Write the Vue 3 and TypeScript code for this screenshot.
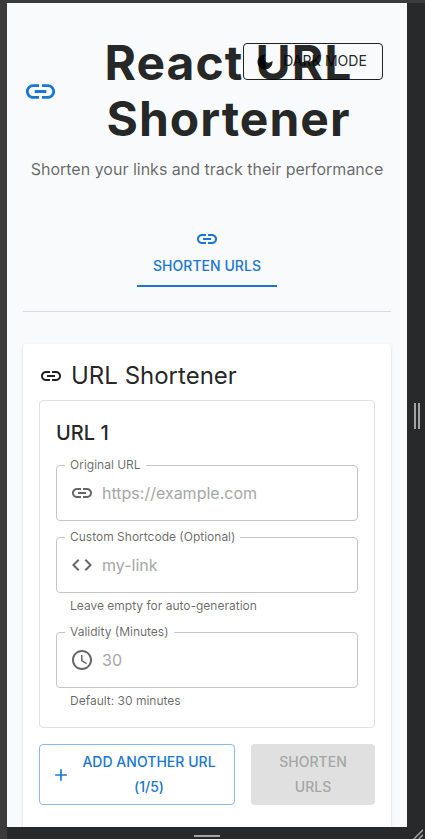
<script setup lang="ts">
import { ref } from 'vue'

interface Field {
  key: string
  label: string
  placeholder: string
  icon: string
  helper?: string
}

const icons: Record<string, string> = {
  link: 'M3.9 12c0-1.71 1.39-3.1 3.1-3.1h4V7H7c-2.76 0-5 2.24-5 5s2.24 5 5 5h4v-1.9H7c-1.71 0-3.1-1.39-3.1-3.1M8 13h8v-2H8zm9-6h-4v1.9h4c1.71 0 3.1 1.39 3.1 3.1s-1.39 3.1-3.1 3.1h-4V17h4c2.76 0 5-2.24 5-5s-2.24-5-5-5',
  moon: 'M12 3c-4.97 0-9 4.03-9 9s4.03 9 9 9 9-4.03 9-9c0-.46-.04-.92-.1-1.36-.98 1.37-2.58 2.26-4.4 2.26-2.98 0-5.4-2.42-5.4-5.4 0-1.81.89-3.42 2.26-4.4-.44-.06-.9-.1-1.36-.1',
  code: 'M9.4 16.6 4.8 12l4.6-4.6L8 6l-6 6 6 6zm5.2 0 4.6-4.6-4.6-4.6L16 6l6 6-6 6z',
  clock: 'M11.99 2C6.47 2 2 6.48 2 12s4.47 10 9.99 10C17.52 22 22 17.52 22 12S17.52 2 11.99 2M12 20c-4.42 0-8-3.58-8-8s3.58-8 8-8 8 3.58 8 8-3.58 8-8 8m.5-13H11v6l5.25 3.15.75-1.23-4.5-2.67z',
  add: 'M19 13h-6v6h-2v-6H5v-2h6V5h2v6h6z',
}

const fields: Field[] = [
  { key: 'url', label: 'Original URL', placeholder: 'https://example.com', icon: 'link' },
  { key: 'code', label: 'Custom Shortcode (Optional)', placeholder: 'my-link', icon: 'code', helper: 'Leave empty for auto-generation' },
  { key: 'validity', label: 'Validity (Minutes)', placeholder: '30', icon: 'clock', helper: 'Default: 30 minutes' },
]

const values = ref<Record<string, string>>({ url: '', code: '', validity: '' })
</script>

<template>
  <div class="frame">
    <main class="screen">
      <button class="btn outlined mode">
        <svg class="icon start" viewBox="0 0 24 24"><path :d="icons.moon" /></svg>
        Dark Mode
      </button>

      <header class="header">
        <svg class="icon logo" viewBox="0 0 24 24"><path :d="icons.link" /></svg>
        <h1>React URL Shortener</h1>
      </header>
      <p class="subtitle">Shorten your links and track their performance</p>

      <nav class="tabs">
        <button class="tab">
          <svg class="icon" viewBox="0 0 24 24"><path :d="icons.link" /></svg>
          <span>Shorten URLs</span>
        </button>
      </nav>
      <hr class="divider" />

      <section class="card">
        <h2>
          <svg class="icon" viewBox="0 0 24 24"><path :d="icons.link" /></svg>
          <span>URL Shortener</span>
        </h2>

        <div class="entry">
          <h3>URL 1</h3>
          <div v-for="f in fields" :key="f.key" class="field">
            <fieldset class="outline">
              <legend>{{ f.label }}</legend>
              <svg class="icon" viewBox="0 0 24 24"><path :d="icons[f.icon]" /></svg>
              <input v-model="values[f.key]" :placeholder="f.placeholder" :aria-label="f.label" />
            </fieldset>
            <p v-if="f.helper" class="helper">{{ f.helper }}</p>
          </div>
        </div>

        <div class="actions">
          <button class="btn outlined primary">
            <svg class="icon start" viewBox="0 0 24 24"><path :d="icons.add" /></svg>
            <span>Add Another URL (1/5)</span>
          </button>
          <button class="btn submit" disabled>Shorten URLs</button>
        </div>
      </section>
    </main>

    <div class="rail"><i class="grip-v"></i></div>
    <div class="bar">
      <i class="grip-h"></i>
      <svg class="corner" viewBox="0 0 12 12"><path d="M1 12 12 1M7 12l5-5" /></svg>
    </div>
  </div>
</template>

<style>
body {
  overflow: hidden;
}
</style>

<style scoped>
* {
  box-sizing: border-box;
}
.frame {
  display: grid;
  grid-template-columns: 400px 18px;
  grid-template-rows: 824px 12px;
  width: 425px;
  height: 839px;
  padding: 3px 0 0 7px;
  overflow: hidden;
  background: #3b3b3b;
  color: rgba(0, 0, 0, 0.87);
  font-family: Inter, 'Liberation Sans', sans-serif;
}
.screen {
  position: relative;
  overflow: hidden;
  padding: 32px 16px 0;
  background: #f8fafc;
}
.rail {
  display: flex;
  align-items: center;
  justify-content: center;
  background: #28292b;
}
.grip-v {
  width: 6px;
  height: 26px;
  margin: 2px 0 0 2px;
  border: solid #a2a3a4;
  border-width: 0 2px;
}
.bar {
  position: relative;
  grid-column: 1 / -1;
  display: flex;
  padding: 8px 0 0 187px;
  background: #28292b;
}
.grip-h {
  width: 26px;
  height: 2px;
  background: #a2a3a4;
}
.corner {
  position: absolute;
  right: 2px;
  bottom: 0;
  width: 10px;
  height: 10px;
  fill: none;
  stroke: #a2a3a4;
  stroke-width: 1.8;
}
.icon {
  flex: none;
  width: 24px;
  height: 24px;
  fill: currentColor;
}
h1,
h2,
h3,
p {
  margin: 0;
}
.header {
  display: flex;
  align-items: center;
  gap: 8px;
}
.logo {
  width: 35px;
  height: 35px;
  color: #1976d2;
}
h1 {
  flex: 1;
  font-size: 48px;
  font-weight: 700;
  line-height: 56px;
  letter-spacing: 1px;
  text-align: center;
}
.subtitle {
  margin-top: 10px;
  color: rgba(0, 0, 0, 0.6);
  font-size: 16px;
  line-height: 24px;
  text-align: center;
  white-space: nowrap;
}
.btn {
  display: flex;
  align-items: center;
  justify-content: center;
  margin: 0;
  padding: 5px 15px;
  border: 1px solid transparent;
  border-radius: 4px;
  background: transparent;
  color: inherit;
  font: 500 14px/24.5px Inter, 'Liberation Sans', sans-serif;
  letter-spacing: 0.02px;
  text-transform: uppercase;
}
.start {
  width: 20px;
  height: 20px;
  margin: 0 8px 0 -4px;
}
.outlined {
  border-color: currentColor;
}
.mode {
  position: absolute;
  top: 40px;
  right: 24px;
  width: 140px;
  height: 37px;
  font-weight: 400;
  white-space: nowrap;
}
.tabs {
  display: flex;
  justify-content: center;
  margin-top: 34px;
}
.tab {
  display: flex;
  flex-direction: column;
  align-items: center;
  gap: 6px;
  width: 140px;
  height: 72px;
  padding: 12px 0 0;
  border: 0;
  border-bottom: 2px solid #1976d2;
  background: none;
  color: #1976d2;
  font: 500 14px/17.5px Inter, 'Liberation Sans', sans-serif;
  letter-spacing: 0.04px;
  text-transform: uppercase;
  white-space: nowrap;
}
.divider {
  height: 1px;
  margin: 24px 0 32px;
  border: 0;
  background: #dadbde;
}
.card {
  height: 540px;
  padding: 16px;
  border-radius: 4px;
  background: #fff;
  box-shadow: 0 2px 1px -1px rgba(0, 0, 0, 0.2), 0 1px 1px rgba(0, 0, 0, 0.14), 0 1px 3px rgba(0, 0, 0, 0.12);
}
h2 {
  display: flex;
  align-items: center;
  gap: 8px;
  margin-bottom: 8px;
  font-size: 24px;
  font-weight: 400;
  line-height: 32px;
}
.entry {
  display: flex;
  flex-direction: column;
  gap: 16px;
  padding: 16px;
  border: 1px solid #e0e0e0;
  border-radius: 4px;
}
h3 {
  font-size: 20px;
  font-weight: 500;
  line-height: 32px;
}
.outline {
  display: flex;
  align-items: center;
  gap: 8px;
  height: 62px;
  min-width: 0;
  margin: -6px 0 0;
  padding: 0 13px 6px;
  border: 1px solid #c4c4c4;
  border-radius: 4px;
  color: rgba(0, 0, 0, 0.6);
}
legend {
  height: 12px;
  margin-left: -5px;
  padding: 0 5px;
  font-size: 12px;
  line-height: 12px;
}
input {
  flex: 1;
  min-width: 0;
  padding: 2px 0 0;
  border: 0;
  outline: 0;
  background: none;
  color: rgba(0, 0, 0, 0.87);
  font: 400 16px/23px Inter, 'Liberation Sans', sans-serif;
}
input::placeholder {
  color: #a6a6a6;
  opacity: 1;
}
.helper {
  margin: 3px 14px 0;
  color: rgba(0, 0, 0, 0.6);
  font-size: 12px;
  line-height: 20px;
}
.actions {
  display: grid;
  grid-template-columns: 196px 124px;
  gap: 16px;
  height: 61px;
  margin-top: 16px;
}
.primary {
  border-color: #8cbae8;
  color: #1976d2;
}
.submit {
  background: #e0e0e0;
  color: #a6a6a6;
}
</style>
